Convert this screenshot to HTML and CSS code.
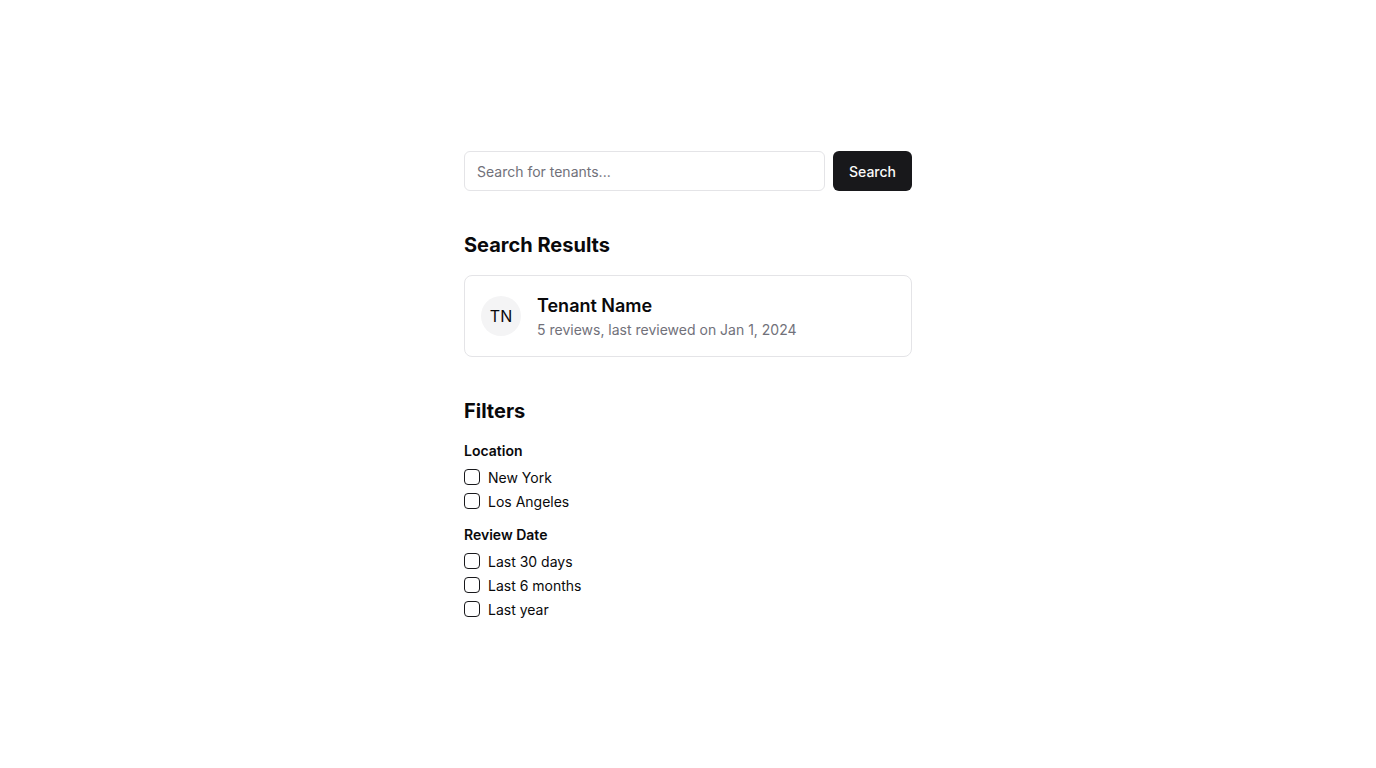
FILE: index.html
```html
<!DOCTYPE html>
<html lang="en">
<head>
<meta charset="utf-8">
<title>Tenant Search</title>
<link rel="stylesheet" href="styles.css">
</head>
<body>
<main class="page">
  <form class="search-bar">
    <input class="search-input" type="text" placeholder="Search for tenants...">
    <button class="search-button" type="button">Search</button>
  </form>

  <section class="section">
    <h2 class="section-title">Search Results</h2>
    <div class="result-card">
      <div class="avatar">TN</div>
      <div class="result-info">
        <div class="result-name">Tenant Name</div>
        <div class="result-meta">5 reviews, last reviewed on Jan 1, 2024</div>
      </div>
    </div>
  </section>

  <section class="section filters">
    <h2 class="section-title">Filters</h2>
    <div class="filter-group">
      <div class="filter-label">Location</div>
      <label class="check-row"><span class="checkbox"></span>New York</label>
      <label class="check-row"><span class="checkbox"></span>Los Angeles</label>
    </div>
    <div class="filter-group">
      <div class="filter-label">Review Date</div>
      <label class="check-row"><span class="checkbox"></span>Last 30 days</label>
      <label class="check-row"><span class="checkbox"></span>Last 6 months</label>
      <label class="check-row"><span class="checkbox"></span>Last year</label>
    </div>
  </section>
</main>
</body>
</html>
```

FILE: styles.css
```css
* {
  box-sizing: border-box;
}

html, body {
  margin: 0;
  padding: 0;
  background: #ffffff;
}

body {
  font-family: Inter, "Noto Sans", "Liberation Sans", sans-serif;
  color: #09090b;
}

.page {
  width: 448px;
  margin: 0 auto;
  padding-top: 151px;
  display: flex;
  flex-direction: column;
  gap: 40px;
}

.search-bar {
  display: flex;
  gap: 8px;
  margin: 0;
}

.search-input {
  flex: 1;
  height: 40px;
  border: 1px solid #e4e4e7;
  border-radius: 6px;
  padding: 0 12px;
  font-family: inherit;
  font-size: 14px;
  color: #09090b;
  outline: none;
}

.search-input::placeholder {
  color: #71717a;
}

.search-button {
  height: 40px;
  padding: 0 16px;
  border: none;
  border-radius: 6px;
  background: #18181b;
  color: #fafafa;
  font-family: inherit;
  font-size: 14px;
  font-weight: 500;
}

.section {
  display: flex;
  flex-direction: column;
}

.section-title {
  margin: 0 0 16px;
  font-size: 20px;
  line-height: 28px;
  font-weight: 700;
}

.result-card {
  display: flex;
  align-items: center;
  gap: 16px;
  padding: 16px;
  border: 1px solid #e4e4e7;
  border-radius: 8px;
}

.avatar {
  width: 40px;
  height: 40px;
  border-radius: 50%;
  background: #f4f4f5;
  display: flex;
  align-items: center;
  justify-content: center;
  font-size: 16px;
  color: #09090b;
}

.result-name {
  font-size: 18px;
  line-height: 28px;
  font-weight: 600;
}

.result-meta {
  font-size: 14px;
  line-height: 20px;
  color: #71717a;
}

.filter-group {
  display: flex;
  flex-direction: column;
  margin-bottom: 12px;
}

.filter-label {
  font-size: 14px;
  line-height: 20px;
  font-weight: 600;
  margin-bottom: 4px;
}

.check-row {
  display: flex;
  align-items: center;
  gap: 8px;
  height: 24px;
  font-size: 14px;
  color: #09090b;
}

.checkbox {
  width: 16px;
  height: 16px;
  border: 1px solid #18181b;
  border-radius: 4px;
  flex: none;
}
```
